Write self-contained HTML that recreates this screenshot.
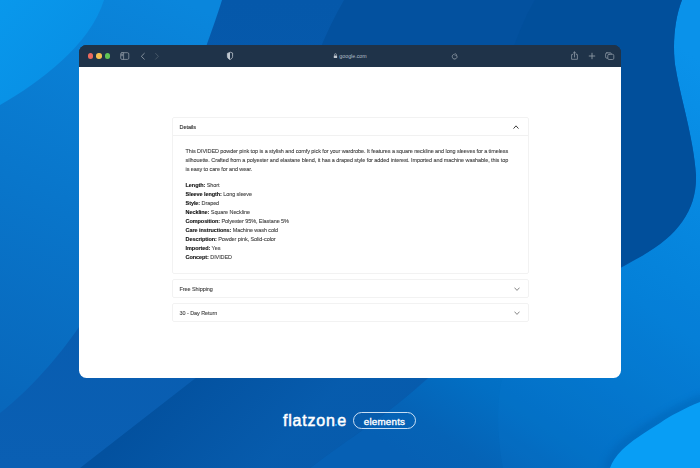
<!DOCTYPE html>
<html><head><meta charset="utf-8">
<style>
*{margin:0;padding:0;box-sizing:border-box}
html,body{width:700px;height:468px;overflow:hidden;background:#0558aa;font-family:"Liberation Sans",sans-serif}
#bg{position:absolute;left:0;top:0;width:700px;height:468px}
#win{position:absolute;left:79.1px;top:45.1px;width:542.3px;height:332.8px;background:linear-gradient(#1f3349 0,#1f3349 21.5px,#fff 21.5px);border-radius:7.5px;overflow:hidden}
#bar{position:absolute;left:0;top:0;width:100%;height:21.5px;background:#1f3349}
.dot{position:absolute;top:8.25px;width:5.5px;height:5.5px;border-radius:50%}
#acc{position:absolute;left:93px;top:72.2px;width:356.6px}
.box{position:relative;border:1px solid #f2f2f2;border-radius:2px;background:#fff}
.hd{position:relative;height:17.2px;font-size:5.5px;letter-spacing:-0.08px;color:#2a2a2a;line-height:18.1px;padding-left:6.5px}
.chev{position:absolute;right:8px;top:6.2px}
.body{border-top:1px solid #f1f1f1;padding:10.8px 0 11.2px 12.5px;color:#444;font-size:5.5px;letter-spacing:-0.08px}
.p{line-height:9px;white-space:nowrap}
.list{margin-top:6.8px;line-height:9px}
.list b{color:#111}
.body,.hd{-webkit-text-stroke:0.1px currentColor}
.p div,.list div,.hd{transform:scaleY(1.1);transform-origin:0 55%}
.logo{position:absolute;left:283px;top:411.3px;color:#fff;font-size:16px;line-height:20px;font-weight:normal;-webkit-text-stroke:0.5px #fff;letter-spacing:0.8px;white-space:nowrap}
.ldot{position:absolute;left:335px;top:423.8px;width:1.9px;height:1.9px;background:#1aa3f5}
.ptxt{position:absolute;left:352.5px;top:413.2px;width:64px;line-height:18px;text-align:center;color:#fff;font-size:9.8px;font-weight:normal;-webkit-text-stroke:0.35px #fff;letter-spacing:0.2px}
.pill{position:absolute;left:352.5px;top:412.2px;width:63.7px;height:17.3px;border:1.1px solid rgba(235,244,255,0.85);border-radius:9px}
</style></head><body>
<svg id="bg" width="700" height="468" viewBox="0 0 700 468">
<defs>
<linearGradient id="gR" x1="700" y1="60" x2="420" y2="468" gradientUnits="userSpaceOnUse">
<stop offset="0" stop-color="#0a92ea"/><stop offset="0.47" stop-color="#0480d8"/><stop offset="0.79" stop-color="#026fc4"/><stop offset="0.92" stop-color="#0563b6"/><stop offset="1" stop-color="#0660b4"/>
</linearGradient>
<linearGradient id="gB" x1="180" y1="0" x2="0" y2="420" gradientUnits="userSpaceOnUse">
<stop offset="0" stop-color="#0a86dc"/><stop offset="1" stop-color="#0866ba"/>
</linearGradient>
<linearGradient id="gC" x1="0" y1="0" x2="0" y2="468" gradientUnits="userSpaceOnUse">
<stop offset="0" stop-color="#0558aa"/><stop offset="1" stop-color="#0a5fb3"/>
</linearGradient>
<linearGradient id="gD" x1="160" y1="395" x2="250" y2="480" gradientUnits="userSpaceOnUse">
<stop offset="0" stop-color="#0a64b8" stop-opacity="0"/><stop offset="1" stop-color="#0a64b8" stop-opacity="0.55"/>
</linearGradient>
<linearGradient id="gA" x1="0" y1="0" x2="70" y2="70" gradientUnits="userSpaceOnUse"><stop offset="0" stop-color="#0998ec"/><stop offset="1" stop-color="#0890e5"/></linearGradient>
<filter id="bl" x="-20%" y="-20%" width="140%" height="140%"><feGaussianBlur stdDeviation="3"/></filter>
</defs>
<rect width="700" height="468" fill="url(#gR)"/>
<path d="M0,0 L682,0 C674,20 672,50 676,70 C680,95 694,140 696,175 C697,210 678,236 640,257 C580,292 470,340 420,385 C380,420 340,445 310,468 L0,468 Z" fill="#03519f"/>
<path d="M535,0 L682,0 C674,20 672,50 676,70 C680,95 694,140 696,175 C697,210 678,236 640,257 L480,330 C470,200 498,62 535,0 Z" fill="#014e9a" opacity="0.7"/>
<path d="M120,377 L430,377 C380,420 340,445 310,468 L60,468 Z" fill="url(#gD)"/>
<path d="M0,0 L344,0 C280,110 236,347 196,377.7 L80,468 L0,468 Z" fill="url(#gC)"/>
<path d="M0,0 L222,0 C200,70 130,250 78.6,327.6 C60,355 30,390 0,413 Z" fill="url(#gB)"/>
<path d="M0,0 L104,0 C90,45 40,82 0,105 Z" fill="url(#gA)"/>
<path d="M503,377 C497,395 496,430 503,468 L610,468 C640,420 680,400 700,395 L700,300 L503,300 Z" fill="#0a7ad0" opacity="0.18"/>
<path d="M704,398 C685,406 670,414 658,421 C643,430 628,440 620,448 C614,454 610,460 607,470" fill="none" stroke="#0260b2" stroke-width="9" opacity="0.45" filter="url(#bl)"/>
<path d="M700,402 C685,408 670,416 660,423 C645,432 630,442 622,450 C616,456 612,462 610,468 L700,468 Z" fill="#089ef5"/>
</svg>
<div id="win">
  <div id="bar">
    <div class="dot" style="left:8.45px;background:#ec6a5e"></div>
    <div class="dot" style="left:16.95px;background:#f4bf4f"></div>
    <div class="dot" style="left:25.65px;background:#61c554"></div>
  </div>
  <div id="acc">
    <div class="box">
      <div class="hd">Details
        <svg class="chev" style="top:6.5px;right:8.4px" width="6" height="4" viewBox="0 0 6 4"><path d="M0.5,3.5 L3,1 L5.5,3.5" fill="none" stroke="#333" stroke-width="0.9"/></svg>
      </div>
      <div class="body">
        <div class="p"><div>This DIVIDED powder pink top is a stylish and comfy pick for your wardrobe. It features a square neckline and long sleeves for a timeless</div><div>silhouette. Crafted from a polyester and elastane blend, it has a draped style for added interest. Imported and machine washable, this top</div><div>is easy to care for and wear.</div></div>
        <div class="list">
          <div><b>Length:</b> Short</div>
          <div><b>Sleeve length:</b> Long sleeve</div>
          <div><b>Style:</b> Draped</div>
          <div><b>Neckline:</b> Square Neckline</div>
          <div><b>Composition:</b> Polyester 95%, Elastane 5%</div>
          <div><b>Care instructions:</b> Machine wash cold</div>
          <div><b>Description:</b> Powder pink, Solid-color</div>
          <div><b>Imported:</b> Yes</div>
          <div><b>Concept:</b> DIVIDED</div>
        </div>
      </div>
    </div>
    <div class="box" style="margin-top:5px"><div class="hd" style="height:17px;line-height:18px;color:#444">Free Shipping
        <svg class="chev" style="top:6.6px" width="6" height="4" viewBox="0 0 6 4"><path d="M0.5,0.8 L3,3.3 L5.5,0.8" fill="none" stroke="#777" stroke-width="0.85"/></svg></div></div>
    <div class="box" style="margin-top:5px"><div class="hd" style="height:17px;line-height:18px;color:#444">30 - Day Return
        <svg class="chev" style="top:6.6px" width="6" height="4" viewBox="0 0 6 4"><path d="M0.5,0.8 L3,3.3 L5.5,0.8" fill="none" stroke="#777" stroke-width="0.85"/></svg></div></div>
  </div>
</div>
<svg style="position:absolute;left:0;top:0" width="700" height="468" viewBox="0 0 700 468">
<g fill="none" stroke="#8d98a4" stroke-width="0.8" stroke-linecap="round" stroke-linejoin="round">
<rect x="120.7" y="52.7" width="8.1" height="6.7" rx="1.3"/>
<path d="M123.6,52.8 V59.3 M121.5,54.4 H122.7 M121.5,55.7 H122.7"/>
<path d="M144.3,53.4 L141.3,56.3 L144.3,59.2" stroke-width="0.9"/>
<path d="M155.6,53.4 L158.4,56.3 L155.6,59.2" stroke="#4b5b6b" stroke-width="0.9"/>
<path d="M230,52.4 L227.4,53.4 L227.4,56.4 C227.4,57.9 228.8,59.1 230,59.5 C231.2,59.1 232.6,57.9 232.6,56.4 L232.6,53.4 Z" stroke="#c0c8d0"/>
<path d="M454.3,54.3 A2.4,2.4 0 1 0 456.6,55.2" stroke-width="0.85"/>
<path d="M455.2,53.4 L456.4,54.6 L455,55.5" stroke-width="0.7"/>
<path d="M572.7,54.6 H571.6 V59.3 H577.4 V54.6 H576.3 M574.5,57 V52 M573.1,53.3 L574.5,51.9 L575.9,53.3" stroke-width="0.8"/>
<path d="M592,53.2 V58.8 M589.2,56 H594.8" stroke-width="0.9"/>
<rect x="605.6" y="52.8" width="5.8" height="5.4" rx="1.3"/>
<rect x="607.8" y="54.3" width="6" height="5.2" rx="1.3" fill="#1f3349"/>
</g>
<path d="M230,52.4 L227.4,53.4 L227.4,56.4 C227.4,57.9 228.8,59.1 230,59.5 Z" fill="#c0c8d0"/>
<g fill="#c0c8d0"><rect x="333.8" y="55.4" width="3.3" height="2.7" rx="0.4"/></g>
<path d="M334.5,55.5 V54.6 A0.95,0.95 0 0 1 336.4,54.6 V55.5" fill="none" stroke="#c0c8d0" stroke-width="0.6"/>
<text x="339.3" y="58" font-family="Liberation Sans" font-size="5.3" fill="#b4bec8">google.com</text>
</svg>
<div class="logo">flatzon</div><div class="ldot"></div><div class="logo" style="left:337.3px">e</div>
<div class="pill"></div><div class="ptxt">elements</div>
</body></html>
